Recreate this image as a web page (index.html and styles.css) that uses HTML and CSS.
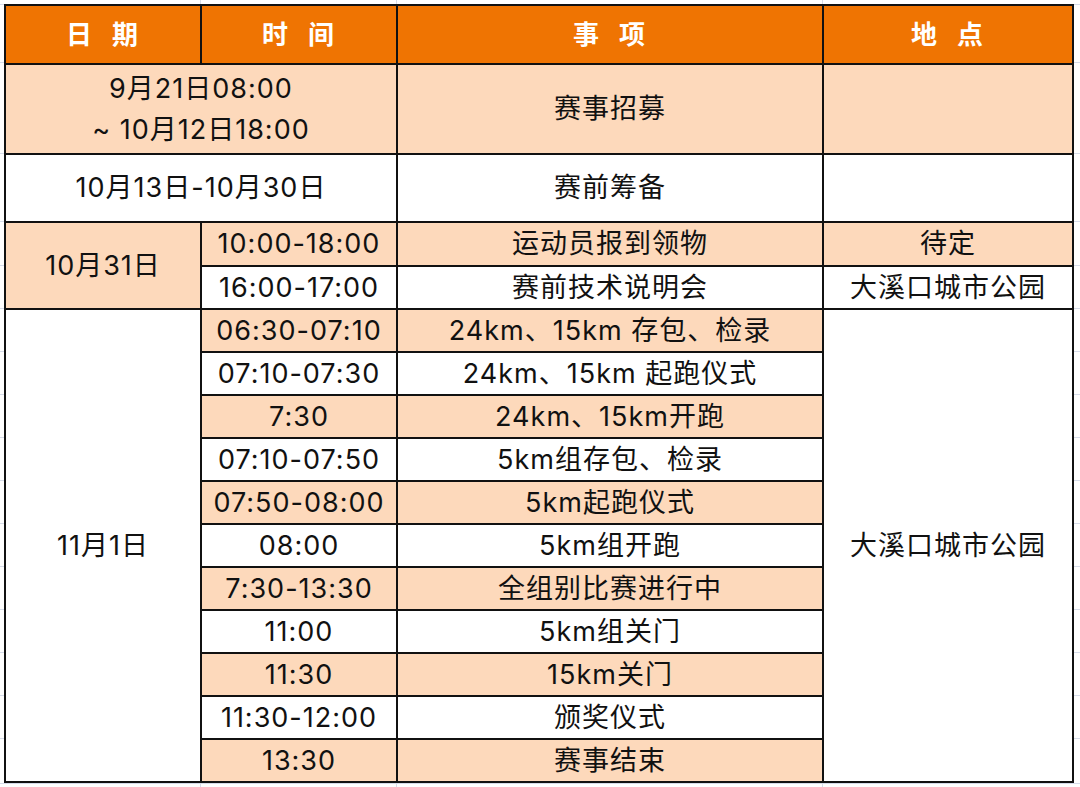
FILE: index.html
```html
<!DOCTYPE html>
<html lang="zh">
<head>
<meta charset="utf-8">
<link rel="stylesheet" href="styles.css">
</head>
<body>
<table class="sched">
  <colgroup>
    <col class="c-date"><col class="c-time"><col class="c-item"><col class="c-place">
  </colgroup>
  <thead>
    <tr class="r-head">
      <th>日 期</th><th>时 间</th><th>事 项</th><th>地 点</th>
    </tr>
  </thead>
  <tbody>
    <tr class="r-1 pe">
      <td colspan="2" class="two">9月21日08:00<br>~ 10月12日18:00</td>
      <td>赛事招募</td>
      <td></td>
    </tr>
    <tr class="r-2">
      <td colspan="2">10月13日-10月30日</td>
      <td>赛前筹备</td>
      <td></td>
    </tr>
    <tr class="r-3 pe">
      <td rowspan="2" class="pe">10月31日</td>
      <td>10:00-18:00</td>
      <td>运动员报到领物</td>
      <td>待定</td>
    </tr>
    <tr class="r-4">
      <td>16:00-17:00</td>
      <td>赛前技术说明会</td>
      <td>大溪口城市公园</td>
    </tr>
    <tr class="r-n pe">
      <td rowspan="11" class="wh">11月1日</td>
      <td>06:30-07:10</td>
      <td>24km、15km 存包、检录</td>
      <td rowspan="11" class="wh">大溪口城市公园</td>
    </tr>
    <tr class="r-n"><td>07:10-07:30</td><td>24km、15km 起跑仪式</td></tr>
    <tr class="r-n pe"><td>7:30</td><td>24km、15km开跑</td></tr>
    <tr class="r-n"><td>07:10-07:50</td><td>5km组存包、检录</td></tr>
    <tr class="r-n pe"><td>07:50-08:00</td><td>5km起跑仪式</td></tr>
    <tr class="r-n"><td>08:00</td><td>5km组开跑</td></tr>
    <tr class="r-n pe"><td>7:30-13:30</td><td>全组别比赛进行中</td></tr>
    <tr class="r-n"><td>11:00</td><td>5km组关门</td></tr>
    <tr class="r-n pe"><td>11:30</td><td>15km关门</td></tr>
    <tr class="r-n"><td>11:30-12:00</td><td>颁奖仪式</td></tr>
    <tr class="r-n pe"><td>13:30</td><td>赛事结束</td></tr>
  </tbody>
</table>
</body>
</html>
```

FILE: styles.css
```css
html, body {
  margin: 0;
  padding: 0;
}
body {
  padding: 4px 0 0 4px;
  font-family: "Inter", "Noto Sans CJK SC", sans-serif;
  color: #111111;
  min-height: 787px;
  box-sizing: border-box;
  background-color: #ffffff;
  background-repeat: no-repeat;
  background-image:
    linear-gradient(#d6dce9, #d6dce9),
    linear-gradient(#d6dce9, #d6dce9),
    linear-gradient(#d6dce9, #d6dce9),
    linear-gradient(#d6dce9, #d6dce9),
    linear-gradient(#d6dce9, #d6dce9),
    linear-gradient(#d6dce9, #d6dce9),
    linear-gradient(#d6dce9, #d6dce9),
    linear-gradient(#d6dce9, #d6dce9),
    linear-gradient(#d6dce9, #d6dce9),
    linear-gradient(#d6dce9, #d6dce9),
    linear-gradient(#d6dce9, #d6dce9),
    linear-gradient(#d6dce9, #d6dce9),
    linear-gradient(#d6dce9, #d6dce9),
    linear-gradient(#d6dce9, #d6dce9),
    linear-gradient(#d6dce9, #d6dce9),
    linear-gradient(#d6dce9, #d6dce9),
    linear-gradient(#d6dce9, #d6dce9),
    linear-gradient(#d6dce9, #d6dce9),
    linear-gradient(#d6dce9, #d6dce9),
    linear-gradient(#d6dce9, #d6dce9);
  background-size:
    1px 100%, 1px 100%, 1px 100%,
    100% 1px, 100% 1px, 100% 1px, 100% 1px, 100% 1px, 100% 1px,
    100% 1px, 100% 1px, 100% 1px, 100% 1px, 100% 1px, 100% 1px,
    100% 1px, 100% 1px, 100% 1px, 100% 1px, 100% 1px;
  background-position:
    200px 0, 396px 0, 822px 0,
    0 4px, 0 62px, 0 153px, 0 221px, 0 265px, 0 308px,
    0 351px, 0 394px, 0 437px, 0 480px, 0 523px, 0 566px,
    0 609px, 0 652px, 0 695px, 0 738px, 0 783px;
}
.sched {
  border-collapse: collapse;
  table-layout: fixed;
  width: 1068px;
  border: 2px solid #111111;
}
.c-date { width: 196px; }
.c-time { width: 196px; }
.c-item { width: 426px; }
.c-place { width: 250px; }
.sched th, .sched td {
  border: 2px solid #111111;
  padding: 0 0 1px;
  text-align: center;
  vertical-align: middle;
  font-size: 27px;
  line-height: 39px;
  letter-spacing: 1px;
  font-weight: 400;
  background: #ffffff;
}
.sched td.two { line-height: 41px; padding: 0 0 1px; }
.sched th {
  background: #ef7402;
  color: #ffffff;
  font-weight: 700;
  font-size: 26px;
  word-spacing: 10px;
  letter-spacing: 2px;
  padding: 0;
}
.r-head { height: 59px; }
.r-1 { height: 90px; }
.r-2 { height: 68px; }
.r-3 { height: 44px; }
.r-4 { height: 43px; }
.r-n { height: 43px; }
.pe td { background: #fdd9bb; }
.pe td.wh, .sched td.wh { background: #ffffff; }
.sched td.pe { background: #fdd9bb; }
```
